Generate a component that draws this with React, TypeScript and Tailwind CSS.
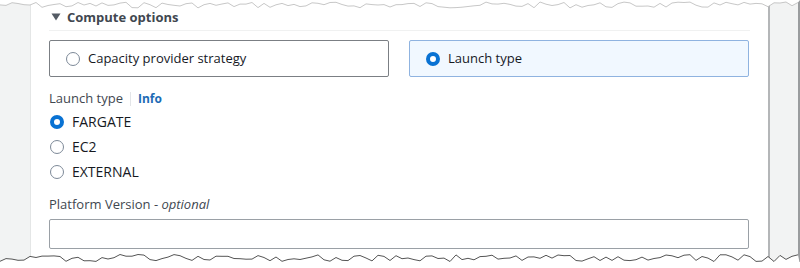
import React from "react";

const FONT = { fontFamily: '"Open Sans", "Noto Sans", sans-serif' };

function jag(y0: number, amp: number, seed: number) {
  let pts: string[] = [];
  let s = seed;
  for (let x = 0; x <= 800; x += 6) {
    s = (s * 9301 + 49297) % 233280;
    const r = s / 233280;
    pts.push(`${x},${(y0 + (r - 0.5) * amp * 2).toFixed(1)}`);
  }
  return pts;
}

function TornEdge({ side }: { side: "top" | "bottom" }) {
  const pts = side === "top" ? jag(5, 3, 7) : jag(7, 3.5, 19);
  const fill =
    side === "top"
      ? `M0,0 L${pts.join(" L")} L800,0 Z`
      : `M0,14 L${pts.join(" L")} L800,14 Z`;
  return (
    <svg
      width="800"
      height="14"
      viewBox="0 0 800 14"
      className={`absolute left-0 ${side === "top" ? "top-0" : "bottom-[3px]"}`}
    >
      <path d={fill} fill="#ffffff" />
      <polyline
        points={pts.join(" ")}
        fill="none"
        stroke={side === "top" ? "#b9b9b9" : "#555"}
        strokeWidth={side === "top" ? 0.8 : 1}
      />
    </svg>
  );
}

function Radio({ checked }: { checked?: boolean }) {
  return checked ? (
    <span className="inline-block w-[14px] h-[14px] rounded-full border-[4px] border-[#0972d3] bg-white shrink-0" />
  ) : (
    <span className="inline-block w-[14px] h-[14px] rounded-full border-[1.5px] border-[#7d8998] bg-white shrink-0" />
  );
}

export default function App() {
  return (
    <div className="relative w-[800px] h-[268px] bg-white overflow-hidden text-[#16191f]" style={FONT}>
      <div className="flex h-[262px]">
        <div className="w-[31px] bg-[#f2f3f3] border-r border-[#e4e6e6]" />
        <div className="flex-1 bg-white pl-[18px] pr-[19px] pt-[7px]">
          <div className="flex items-center gap-[6px] h-[20px] pl-[2px]">
            <svg width="10" height="8" viewBox="0 0 10 8">
              <path d="M0.5 0.5 L9.5 0.5 L5 7.5 Z" fill="#545b64" />
            </svg>
            <span className="text-[13px] font-bold text-[#414750] leading-none">Compute options</span>
          </div>
          <div className="h-px bg-[#f0f1f1] mt-[3px] mr-[-1px]" />
          <div className="grid grid-cols-2 gap-[20px] mt-[9px]">
            <div className="h-[37px] flex items-center gap-[8px] pl-[16px] border border-[#7b7f84] rounded-[2px]">
              <Radio />
              <span className="text-[13px]">Capacity provider strategy</span>
            </div>
            <div className="h-[37px] flex items-center gap-[8px] pl-[16px] border border-[#8fb3e0] bg-[#f1f8ff] rounded-[2px]">
              <Radio checked />
              <span className="text-[13px]">Launch type</span>
            </div>
          </div>
          <div className="flex items-center mt-[13px] h-[18px] text-[13px]">
            <span className="text-[#414750]">Launch type</span>
            <span className="w-px h-[14px] bg-[#e3e5e8] mx-[7px]" />
            <span className="text-[12px] font-bold text-[#1d6bb5]">Info</span>
          </div>
          <div className="flex flex-col gap-[6px] mt-[4px] pl-[1px] text-[14px]">
            <div className="flex items-center gap-[8px] h-[19px]">
              <Radio checked />
              <span>FARGATE</span>
            </div>
            <div className="flex items-center gap-[8px] h-[19px]">
              <Radio />
              <span>EC2</span>
            </div>
            <div className="flex items-center gap-[8px] h-[19px]">
              <Radio />
              <span>EXTERNAL</span>
            </div>
          </div>
          <div className="mt-[14px] h-[18px] text-[13px] text-[#414750]">
            Platform Version - <i>optional</i>
          </div>
          <div className="mt-[6px] h-[30px] border border-[#9aa0a6] rounded-[2px] bg-white" />
        </div>
        <div className="w-[32px] bg-[#f2f3f3] border-l-2 border-[#b4b6b8] border-r-2 border-r-[#9a9c9e]" />
      </div>
      <TornEdge side="top" />
      <TornEdge side="bottom" />
    </div>
  );
}
